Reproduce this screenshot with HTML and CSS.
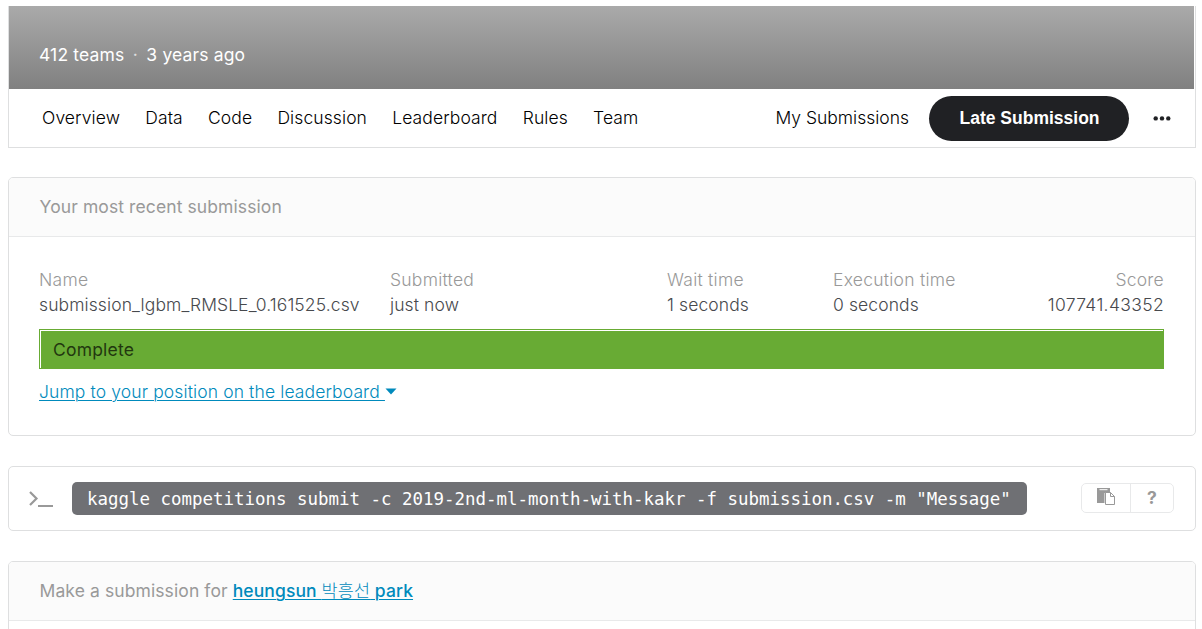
FILE: index.html
```html
<!DOCTYPE html>
<html lang="en">
<head>
<meta charset="utf-8">
<title>Submissions</title>
<link rel="stylesheet" href="styles.css">
</head>
<body>
<header class="competition">
  <div class="banner"><span>412 teams</span><span class="dot">·</span><span>3 years ago</span></div>
  <nav class="nav">
    <a class="tab">Overview</a><a class="tab">Data</a><a class="tab">Code</a><a class="tab">Discussion</a><a class="tab">Leaderboard</a><a class="tab">Rules</a><a class="tab">Team</a>
    <a class="mine">My Submissions</a>
    <button class="late">Late Submission</button>
    <svg class="more" width="18" height="6" viewBox="0 0 18 6"><circle cx="2.7" cy="3.4" r="2.2"/><circle cx="9" cy="3.4" r="2.2"/><circle cx="15.3" cy="3.4" r="2.2"/></svg>
  </nav>
</header>
<section class="card recent">
  <h2 class="card-head">Your most recent submission</h2>
  <div class="card-body">
    <div class="facts">
      <div><div class="label">Name</div><div class="file">submission_lgbm_RMSLE_0.161525.csv</div></div>
      <div><div class="label">Submitted</div><div>just now</div></div>
      <div><div class="label">Wait time</div><div>1 seconds</div></div>
      <div><div class="label">Execution time</div><div>0 seconds</div></div>
      <div class="score"><div class="label">Score</div><div class="points">107741.43352</div></div>
    </div>
    <div class="status"><div class="status-fill">Complete</div></div>
    <div class="jump"><a class="link">Jump to your position on the leaderboard&nbsp;</a><svg width="12" height="7" viewBox="0 0 12 7"><path d="M.5.5h11L6 6.5z"/></svg></div>
  </div>
</section>
<section class="card command">
  <svg class="prompt" width="26" height="18" viewBox="0 0 26 18"><path d="M2 2l6.500 6.500L2 15M10 16h15"/></svg>
  <code class="code">kaggle competitions submit -c 2019-2nd-ml-month-with-kakr -f submission.csv -m "Message"</code>
  <div class="tools">
    <span class="tool copy"><svg width="18" height="18" viewBox="0 0 18 18"><path class="solid" d="M0 0h13v5H7.500v10H0z"/><path class="slot" d="M2.500 1.700h8"/><path class="page" d="M8.500 4.500h5l4 4v8h-9zM13.500 4.500v4h4"/></svg></span>
    <span class="tool help">?</span>
  </div>
</section>
<section class="card make">
  <h2 class="card-head">Make a submission for <a class="user">heungsun <span class="ko">박흥선</span> park</a></h2>
</section>
</body>
</html>
```
FILE: styles.css
```css
* { box-sizing: border-box; }
html { overflow: hidden; }
body { margin: 0; padding: 6px 6px 0 8px; height: 629px; overflow: hidden; background: #fff; color: #47494d; font: 300 17.5px/25px Inter, "Noto Sans CJK KR", sans-serif; letter-spacing: .1px; }
.competition { height: 142px; border: 1px solid #dedfe0; border-top: 0; }
.banner { height: 83px; margin-right: 1px; padding: 36px 31px 0 30px; display: flex; font-weight: 400; letter-spacing: .15px; color: #fff; background: linear-gradient(#aaa, #808080); }
.dot { width: 22px; text-align: center; opacity: .7; }
.nav { height: 58px; padding-left: 33px; display: flex; align-items: center; color: #000; }
.tab, .mine { padding-bottom: 2px; }
.tab { margin-right: 25.200px; }
.mine { margin-left: auto; margin-right: 20px; letter-spacing: 0; }
.late { width: 200px; height: 45px; border: 0; border-radius: 23px; padding: 1px 0 0 1px; background: #202124; color: #fff; font: 700 17.5px "Liberation Sans", sans-serif; }
.more { margin: 0 24px; fill: #202124; }
.card { border: 1px solid #dedfe0; border-radius: 5px; overflow: hidden; }
.card-head { margin: 0; height: 59px; padding: 16px 31px 0 30.500px; background: #fbfbfb; border-bottom: 1px solid #e8e9ea; color: #999; font-size: 17.5px; font-weight: 400; line-height: 26px; }
.recent { margin-top: 29px; height: 259px; }
.card-body { padding: 30px 31px 0 30px; }
.facts { display: grid; grid-template-columns: 351px 277px 166px 190px 1fr; white-space: nowrap; }
.label { color: #999; font-weight: 350; letter-spacing: .25px; }
.score { text-align: right; }
.points { letter-spacing: .35px; }
.status { margin-top: 12px; height: 40px; border: 1px solid #68ab34; padding: 1px 0 0 1px; }
.status-fill { height: 37px; padding: 6px 12px; background: #68ab34; color: #22370f; font-weight: 400; letter-spacing: .2px; }
.jump { display: flex; align-items: center; margin-top: 10px; color: #008abc; fill: #008abc; letter-spacing: .12px; }
.link, .user { text-decoration: underline; text-decoration-thickness: 1px; text-underline-offset: 2px; }
.command { margin-top: 30px; height: 65px; display: flex; align-items: center; padding: 0 21px 0 19px; }
.prompt { fill: none; stroke: #999; stroke-width: 2.200; }
.code { margin-left: 18px; width: 955px; height: 33px; border-radius: 5px; background: #6f7074; color: #fff; padding: 1px 0 0 15px; font: 17.45px/33px "DejaVu Sans Mono", monospace; letter-spacing: 0; white-space: nowrap; }
.tools { margin: 0 0 2px auto; display: flex; width: 93px; height: 30px; border: 1px solid #e8e9ea; border-radius: 5px; }
.tool { display: flex; align-items: center; justify-content: center; width: 48px; color: #999; }
.copy svg { margin-bottom: 1px; }
.help { flex: 1; border-left: 1px solid #e8e9ea; font-weight: 700; }
.solid { fill: #999; }
.slot { stroke: #fff; }
.page { fill: #fff; stroke: #999; }
.make { margin-top: 30px; height: 90px; }
.user { color: #008abc; font-weight: 500; }
.ko { font-weight: 300; }
```
